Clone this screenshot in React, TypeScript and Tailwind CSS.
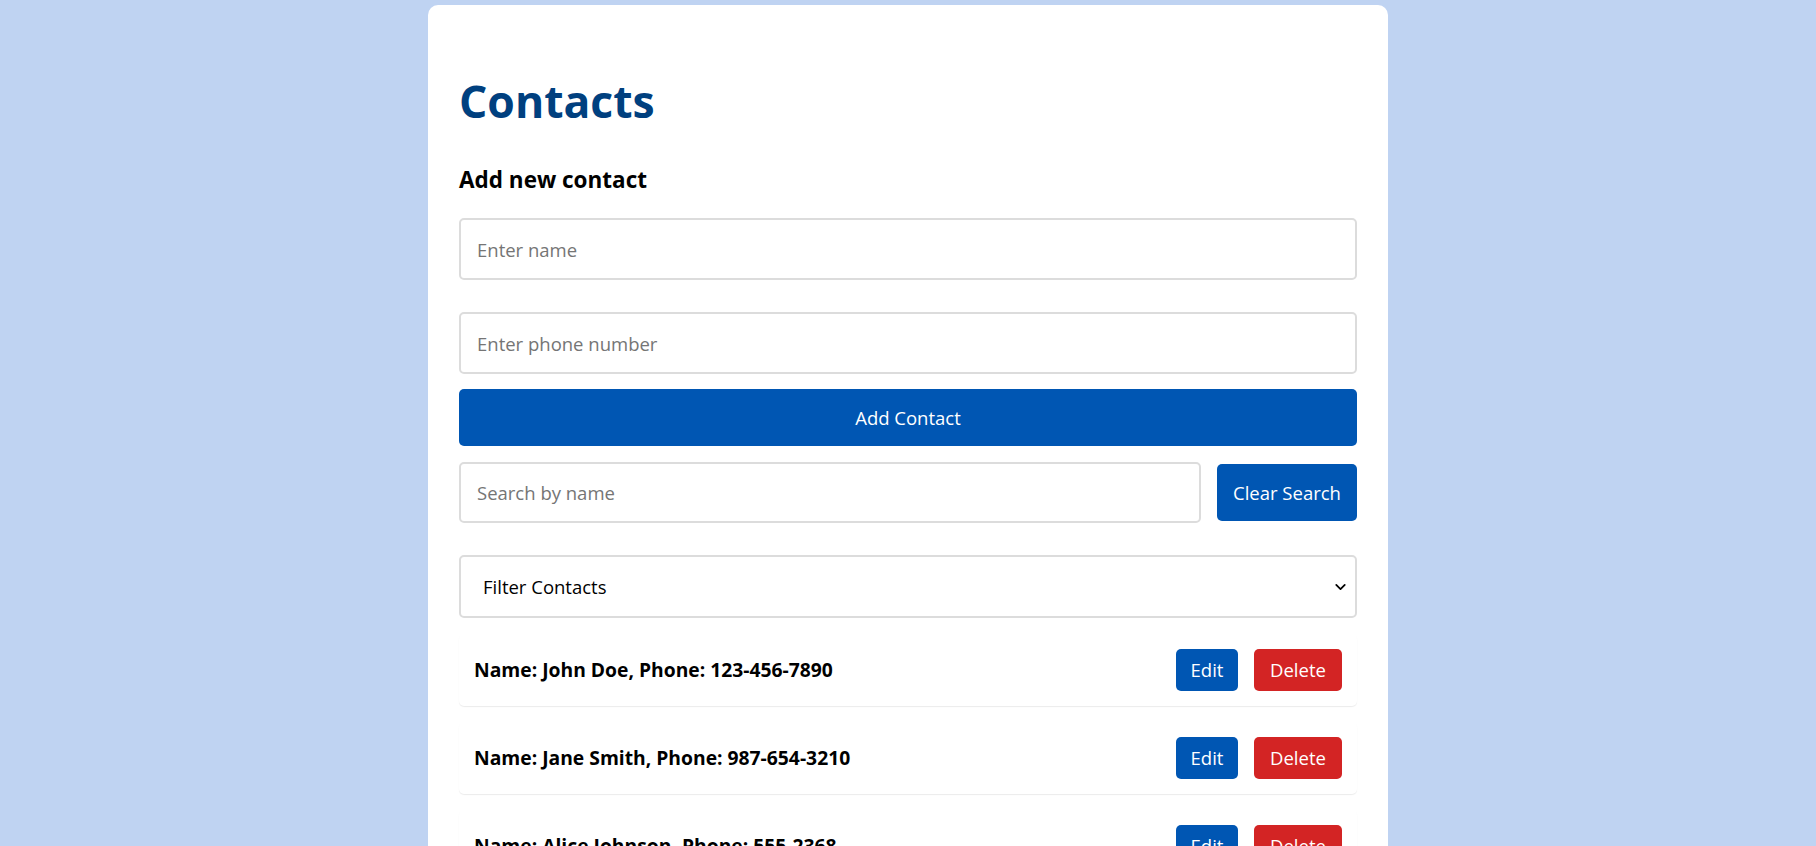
import { ChevronDown } from "lucide-react";

const contacts = [
  { name: "John Doe", phone: "123-456-7890" },
  { name: "Jane Smith", phone: "987-654-3210" },
  { name: "Alice Johnson", phone: "555-2368" },
];

export default function App() {
  return (
    <div className="min-h-screen overflow-hidden bg-[#bfd3f2] pt-[5px] font-['Open_Sans',sans-serif]">
      <div className="mx-auto w-[960px] rounded-[10px] bg-white px-[31px] pt-[72px] pb-10">
        <h1 className="text-[44.5px] leading-[48px] font-bold text-[#00407f]">Contacts</h1>

        <h3 className="mt-[43px] text-[22.5px] leading-[24px] font-bold text-black">Add new contact</h3>

        <input
          className="mt-[26px] block h-[62px] w-full rounded-[5px] border-2 border-[#dcdcdc] px-4 text-[18.5px] text-black outline-none placeholder:text-[#757575]"
          placeholder="Enter name"
        />
        <input
          className="mt-[32px] block h-[62px] w-full rounded-[5px] border-2 border-[#dcdcdc] px-4 text-[18.5px] text-black outline-none placeholder:text-[#757575]"
          placeholder="Enter phone number"
        />
        <button className="mt-[15px] block h-[57px] w-full rounded-[5px] bg-[#0056b3] text-[18.5px] text-white">
          Add Contact
        </button>

        <div className="mt-[16px] flex items-center gap-4">
          <input
            className="block h-[61px] flex-1 rounded-[5px] border-2 border-[#dcdcdc] px-4 text-[18.5px] text-black outline-none placeholder:text-[#757575]"
            placeholder="Search by name"
          />
          <button className="h-[57px] w-[140px] rounded-[5px] bg-[#0056b3] text-[18.5px] text-white">
            Clear Search
          </button>
        </div>

        <div className="relative mt-[32px]">
          <select className="block h-[63px] w-full appearance-none rounded-[5px] border-2 border-[#dcdcdc] bg-white px-[22px] text-[18.5px] text-black outline-none">
            <option>Filter Contacts</option>
          </select>
          <ChevronDown
            className="pointer-events-none absolute top-1/2 right-[8px] -translate-y-1/2 text-black"
            size={17}
            strokeWidth={2.5}
          />
        </div>

        <ul>
          {contacts.map((c) => (
            <li
              key={c.name}
              className="mt-4 flex items-center justify-between rounded-[5px] px-[15px] py-[15px] shadow-[0_1px_1px_rgba(0,0,0,0.08)]"
            >
              <span className="text-[19.3px] font-bold text-black">
                Name: {c.name}, Phone: {c.phone}
              </span>
              <div className="flex gap-4">
                <button className="h-[42px] w-[62px] rounded-[5px] bg-[#0056b3] text-[18.5px] text-white">Edit</button>
                <button className="h-[42px] w-[88px] rounded-[5px] bg-[#d32424] text-[18.5px] text-white">Delete</button>
              </div>
            </li>
          ))}
        </ul>
      </div>
    </div>
  );
}
